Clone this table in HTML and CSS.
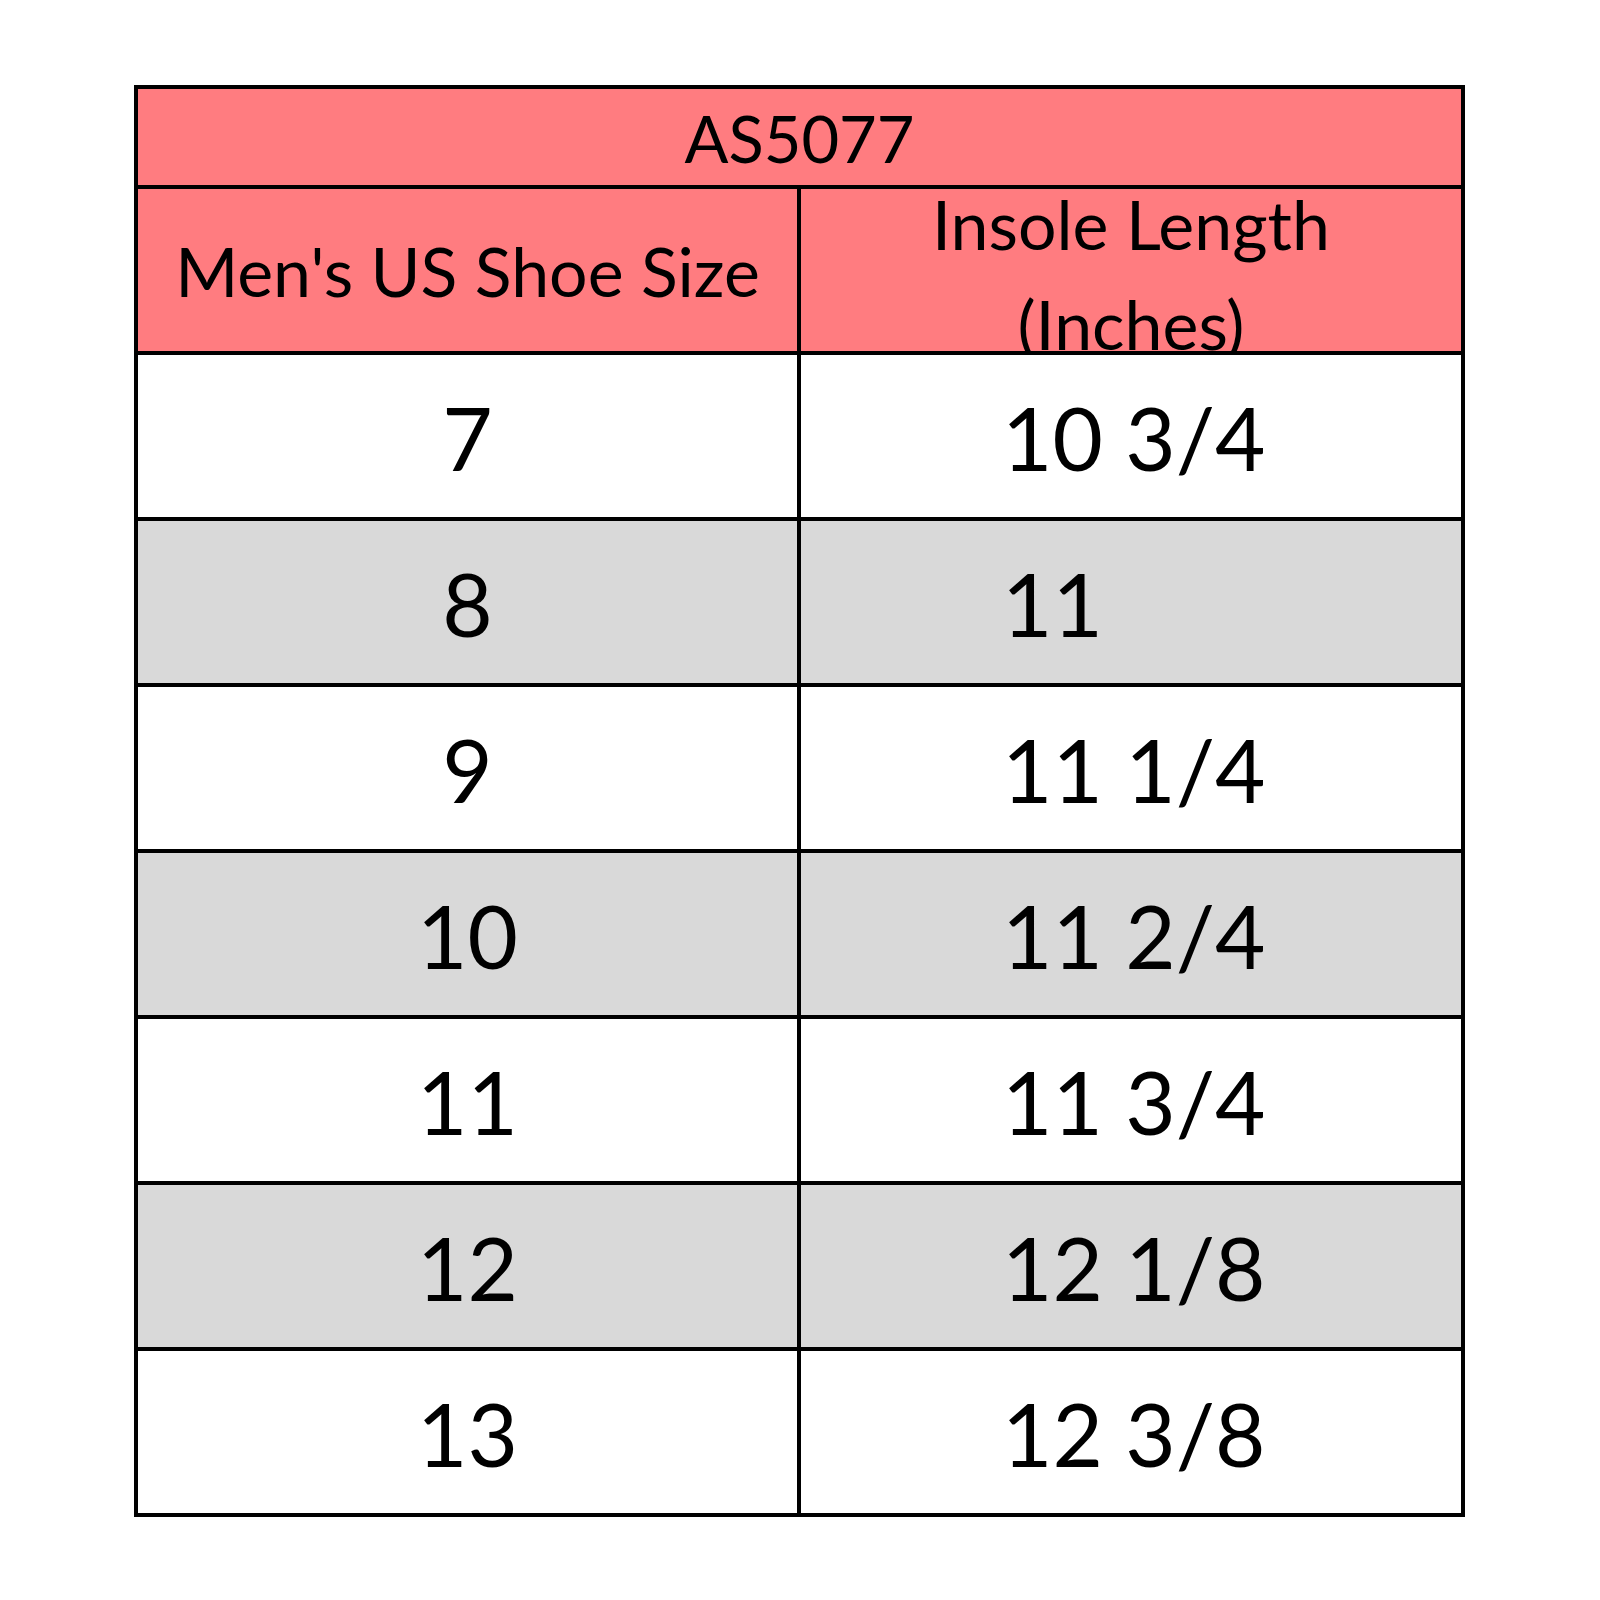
FILE: index.html
```html
<!DOCTYPE html>
<html>
<head>
<meta charset="utf-8">
<link rel="stylesheet" href="styles.css">
</head>
<body>
<div class="page">
  <div class="chart">
    <div class="cell title">AS5077</div>
    <div class="cell head head-left">Men's US Shoe Size</div>
    <div class="cell head head-right"><div class="line1">Insole Length</div><div class="line2">(Inches)</div></div>

    <div class="cell size">7</div><div class="cell len">10 3/4</div>
    <div class="cell size alt">8</div><div class="cell len alt">11</div>
    <div class="cell size">9</div><div class="cell len">11 1/4</div>
    <div class="cell size alt">10</div><div class="cell len alt">11 2/4</div>
    <div class="cell size">11</div><div class="cell len">11 3/4</div>
    <div class="cell size alt">12</div><div class="cell len alt">12 1/8</div>
    <div class="cell size">13</div><div class="cell len">12 3/8</div>
  </div>
</div>
</body>
</html>
```

FILE: styles.css
```css
html, body {
  margin: 0;
  padding: 0;
  background: #ffffff;
}

.page {
  padding: 85px 0 0 134px;
  font-family: Lato, "Open Sans", sans-serif;
  color: #000;
}

.chart {
  display: grid;
  grid-template-columns: 659px 660px;
  grid-template-rows: 96px 162px repeat(7, 162px);
  gap: 4px;
  padding: 4px;
  width: max-content;
  background: #000;
}

.cell {
  background: #ffffff;
  overflow: hidden;
  white-space: nowrap;
}

.alt {
  background: #d9d9d9;
}

.title {
  grid-column: 1 / 3;
  background: #ff7c80;
  text-align: center;
  font-size: 65px;
  line-height: 96px;
  padding-top: 1px;
}

.head {
  background: #ff7c80;
  text-align: center;
}

.head-left {
  font-size: 68px;
  line-height: 162px;
  padding-top: 1px;
}

.head-right {
  font-size: 68px;
}

.head-right .line1 {
  line-height: 70px;
}

.head-right .line2 {
  line-height: 129px;
}

.size {
  text-align: center;
  font-size: 87px;
  line-height: 162px;
  padding-top: 2px;
}

.len {
  text-align: left;
  font-size: 87px;
  line-height: 162px;
  padding-top: 2px;
  padding-left: 201px;
}
```
